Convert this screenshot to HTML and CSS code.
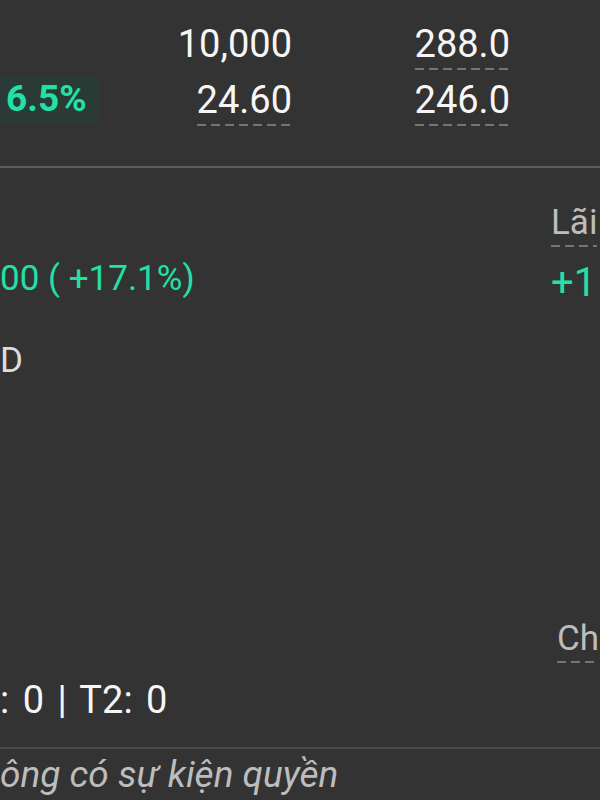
FILE: index.html
```html
<!DOCTYPE html>
<html lang="vi">
<head>
    <meta charset="UTF-8">
    <meta name="viewport" content="width=device-width, initial-scale=1.0">
    <title>Chi tiết cổ phiếu</title>
    <link rel="stylesheet" href="styles.css">
</head>
<body>
    <section class="quote">
        <div class="cell"></div>
        <div class="cell num">10,000</div>
        <div class="cell num"><span class="dashed">288.0</span></div>

        <div class="cell"><span class="badge">6.5%</span></div>
        <div class="cell num"><span class="dashed">24.60</span></div>
        <div class="cell num"><span class="dashed">246.0</span></div>
    </section>

    <section class="detail">
        <div class="col-left">
            <div class="gain">00 ( +17.1%)</div>
            <div class="unit">D</div>
            <div class="settle">: 0 | T2: 0</div>
        </div>
        <div class="col-right">
            <div class="label label-top">Lãi</div>
            <div class="gain-right">+1</div>
            <div class="label label-bottom">Ch</div>
        </div>
    </section>

    <section class="events">
        <p class="empty">ông có sự kiện quyền</p>
    </section>
</body>
</html>
```

FILE: styles.css
```css
body {
    font-family: Roboto, 'Noto Sans', sans-serif;
    background-color: #333333;
    color: #f6f6f6;
    margin: 0;
    padding: 0;
    width: 600px;
    height: 800px;
    overflow: hidden;
    white-space: nowrap;
}

/* bảng giá phía trên */
.quote {
    display: grid;
    grid-template-columns: 98px 194px 218px;
    grid-auto-rows: 56px;
    padding-top: 16px;
    height: 150px;
    border-bottom: 2px solid #5c5c5c;
    font-size: 38px;
    line-height: 56px;
}

.num {
    text-align: right;
}

.dashed {
    display: inline-block;
    line-height: 38px;
    padding-bottom: 7px;
    background: repeating-linear-gradient(to right, #757575 0 9px, transparent 9px 14px) left bottom / 100% 2px no-repeat;
}

.badge {
    display: flex;
    align-items: center;
    height: 48px;
    margin-top: 3px;
    padding-left: 6px;
    background-color: #2a3a34;
    color: #22e0a6;
    font-size: 37px;
    font-weight: bold;
    line-height: 48px;
}

/* phần lãi lỗ */
.detail {
    display: grid;
    grid-template-columns: 1fr 49px;
    height: 579px;
    border-bottom: 2px solid #4a4a4a;
}

.col-left,
.col-right {
    display: flex;
    flex-direction: column;
}

.gain {
    color: #22e0a6;
    font-size: 35px;
    line-height: 48px;
    margin-top: 87px;
}

.gain-right {
    color: #22e0a6;
    font-size: 40px;
    line-height: 48px;
    margin-top: 12px;
}

.unit {
    color: #dddddd;
    font-size: 35px;
    line-height: 42px;
    margin-top: 37px;
}

.settle {
    font-size: 38px;
    line-height: 48px;
    word-spacing: 4px;
    margin-top: auto;
    margin-bottom: 23px;
}

.label {
    width: max-content;
    color: #bdbdbd;
    font-size: 35px;
    line-height: 35px;
    padding-bottom: 7px;
    background: repeating-linear-gradient(to right, #757575 0 9px, transparent 9px 14px) left bottom / 100% 2px no-repeat;
}

.label-top {
    margin-top: 37px;
}

.label-bottom {
    margin-top: auto;
    margin-left: 6px;
    margin-bottom: 84px;
}

/* sự kiện quyền */
.events {
    padding-top: 5px;
}

.empty {
    margin: 0;
    color: #bdbdbd;
    font-size: 37px;
    font-style: italic;
    line-height: 42px;
}
```
